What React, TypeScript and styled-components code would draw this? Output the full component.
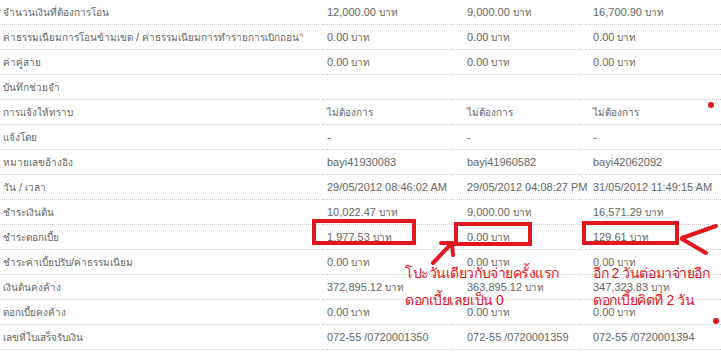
import React from 'react';
import styled, { createGlobalStyle } from 'styled-components';

const rows: { label: string; star?: boolean; values: string[] }[] = [
  { label: 'จำนวนเงินที่ต้องการโอน', values: ['12,000.00 บาท', '9,000.00 บาท', '16,700.90 บาท'] },
  { label: 'ค่าธรรมเนียมการโอนข้ามเขต / ค่าธรรมเนียมการทำรายการเบิกถอน', star: true, values: ['0.00 บาท', '0.00 บาท', '0.00 บาท'] },
  { label: 'ค่าคู่สาย', values: ['0.00 บาท', '0.00 บาท', '0.00 บาท'] },
  { label: 'บันทึกช่วยจำ', values: ['', '', ''] },
  { label: 'การแจ้งให้ทราบ', values: ['ไม่ต้องการ', 'ไม่ต้องการ', 'ไม่ต้องการ'] },
  { label: 'แจ้งโดย', values: ['-', '-', '-'] },
  { label: 'หมายเลขอ้างอิง', values: ['bayi41930083', 'bayi41960582', 'bayi42062092'] },
  { label: 'วัน / เวลา', values: ['29/05/2012 08:46:02 AM', '29/05/2012 04:08:27 PM', '31/05/2012 11:49:15 AM'] },
  { label: 'ชำระเงินต้น', values: ['10,022.47 บาท', '9,000.00 บาท', '16,571.29 บาท'] },
  { label: 'ชำระดอกเบี้ย', values: ['1,977.53 บาท', '0.00 บาท', '129.61 บาท'] },
  { label: 'ชำระค่าเบี้ยปรับ/ค่าธรรมเนียม', values: ['0.00 บาท', '0.00 บาท', '0.00 บาท'] },
  { label: 'เงินต้นคงค้าง', values: ['372,895.12 บาท', '363,895.12 บาท', '347,323.83 บาท'] },
  { label: 'ดอกเบี้ยคงค้าง', values: ['0.00 บาท', '0.00 บาท', '0.00 บาท'] },
  { label: 'เลขที่ใบเสร็จรับเงิน', values: ['072-55 /0720001350', '072-55 /0720001359', '072-55 /0720001394'] },
];

const valuePad = [5, 10, 8];

// thai runs get a smaller size, the fallback thai font is wider than the original one
function Mixed({ text }: { text: string }) {
  const parts = text.split(/([\u0E00-\u0E7F]+)/);
  return (
    <>
      {parts.map((p, i) => (i % 2 === 1 ? <Thai key={i}>{p}</Thai> : p))}
    </>
  );
}

function App() {
  return (
    <Page>
      <GlobalStyle />
      <Table>
        {rows.map((r) => (
          <Row key={r.label}>
            <Cell $pad={3}>
              <Mixed text={r.label} />
              {r.star && <Star>*</Star>}
            </Cell>
            {r.values.map((v, i) => (
              <Cell key={i} $pad={valuePad[i]}>
                <Mixed text={v} />
              </Cell>
            ))}
          </Row>
        ))}
      </Table>

      <RedBox $x={312} $y={219} $w={104} $h={26} />
      <RedBox $x={454} $y={222} $w={78} $h={24} />
      <RedBox $x={582} $y={221} $w={97} $h={24} />

      <Scribble width="721" height="357" viewBox="0 0 721 357">
        <g stroke="#e3161e" strokeWidth="4" strokeLinecap="round" strokeLinejoin="round" fill="none">
          <path d="M433 263 L452 243" />
          <path d="M441 243 L452 243 L453 255" />
          <path d="M682 238 L716 226" />
          <path d="M682 239 L706 253" />
        </g>
      </Scribble>

      <Note $x={405} $y={262}>โปะวันเดียวกับจ่ายครั้งแรก</Note>
      <Note $x={405} $y={289}>ดอกเบี้ยเลยเป็น 0</Note>
      <Note $x={593} $y={262}>อีก 2 วันต่อมาจ่ายอีก</Note>
      <Note $x={593} $y={289}>ดอกเบี้ยคิดที่ 2 วัน</Note>

      <Dot $x={711} $y={105} />
      <Dot $x={716} $y={321} />
    </Page>
  );
}

const GlobalStyle = createGlobalStyle`
  body {
    margin: 0;
    background: #fff;
  }
`;

const Page = styled.div`
  position: relative;
  width: 721px;
  height: 357px;
  overflow: hidden;
  font-family: "Liberation Sans", Arial, sans-serif;
  font-size: 11px;
  color: #666;
`;

const Table = styled.div`
  display: flex;
  flex-direction: column;
`;

const Row = styled.div`
  display: grid;
  grid-template-columns: 319px 132px 125px 1fr;
  column-gap: 3px;
`;

const Cell = styled.div<{ $pad: number }>`
  height: 24px;
  line-height: 24px;
  padding-left: ${(p) => p.$pad}px;
  border-bottom: 1px dotted #c8c8c8;
  white-space: nowrap;
`;

const Thai = styled.span`
  font-size: 10px;
`;

const Star = styled.span`
  color: #f08080;
`;

const RedBox = styled.div<{ $x: number; $y: number; $w: number; $h: number }>`
  position: absolute;
  left: ${(p) => p.$x}px;
  top: ${(p) => p.$y}px;
  width: ${(p) => p.$w}px;
  height: ${(p) => p.$h}px;
  box-sizing: border-box;
  border: 4px solid #e3161e;
`;

const Scribble = styled.svg`
  position: absolute;
  left: 0;
  top: 0;
  pointer-events: none;
`;

const Note = styled.div<{ $x: number; $y: number }>`
  position: absolute;
  left: ${(p) => p.$x}px;
  top: ${(p) => p.$y}px;
  font-size: 14px;
  letter-spacing: -0.45px;
  line-height: 22px;
  color: #e3161e;
  white-space: nowrap;
`;

const Dot = styled.div<{ $x: number; $y: number }>`
  position: absolute;
  left: ${(p) => p.$x - 3}px;
  top: ${(p) => p.$y - 3}px;
  width: 6px;
  height: 6px;
  border-radius: 50%;
  background: #e3161e;
`;

export default App;
